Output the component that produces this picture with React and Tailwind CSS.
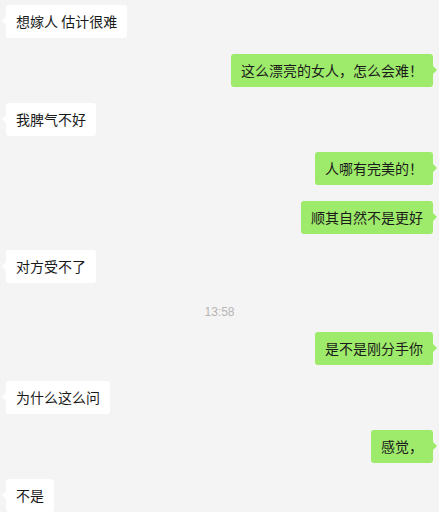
const MESSAGES = [
  { side: "left", text: "想嫁人 估计很难" },
  { side: "right", text: "这么漂亮的女人，怎么会难！" },
  { side: "left", text: "我脾气不好" },
  { side: "right", text: "人哪有完美的！" },
  { side: "right", text: "顺其自然不是更好" },
  { side: "left", text: "对方受不了" },
  { time: "13:58" },
  { side: "right", text: "是不是刚分手你" },
  { side: "left", text: "为什么这么问" },
  { side: "right", text: "感觉，" },
  { side: "left", text: "不是" },
];

function Bubble({ side, text }) {
  const left = side === "left";
  return (
    <div className={`flex ${left ? "justify-start pl-[6px]" : "justify-end pr-[6px]"}`}>
      <div
        className={`relative rounded-[3px] px-[10px] py-[7px] text-[14px] leading-[19px] text-[#1a1a1a] ${
          left ? "bg-white" : "bg-[#9eea6a]"
        }`}
      >
        {left ? (
          <span className="absolute left-[-4px] top-[12px] h-0 w-0 border-y-[4px] border-r-[4px] border-y-transparent border-r-white" />
        ) : (
          <span className="absolute right-[-4px] top-[12px] h-0 w-0 border-y-[4px] border-l-[4px] border-y-transparent border-l-[#9eea6a]" />
        )}
        {text}
      </div>
    </div>
  );
}

export default function App() {
  return (
    <div
      className="h-[512px] w-full overflow-hidden bg-[#f4f4f4] pt-[5px]"
      style={{ fontFamily: '"Microsoft YaHei", "Noto Sans CJK SC", "Noto Sans", sans-serif' }}
    >
      <div className="flex flex-col gap-[16px]">
        {MESSAGES.map((m, i) =>
          m.time ? (
            <div
              key={i}
              className="mt-[4px] mb-[-5px] text-center text-[12px] leading-[18px] text-[#b5b5b5]"
              style={{ fontFamily: '"Liberation Sans", Arial, sans-serif' }}
            >
              {m.time}
            </div>
          ) : (
            <Bubble key={i} side={m.side} text={m.text} />
          )
        )}
      </div>
    </div>
  );
}
